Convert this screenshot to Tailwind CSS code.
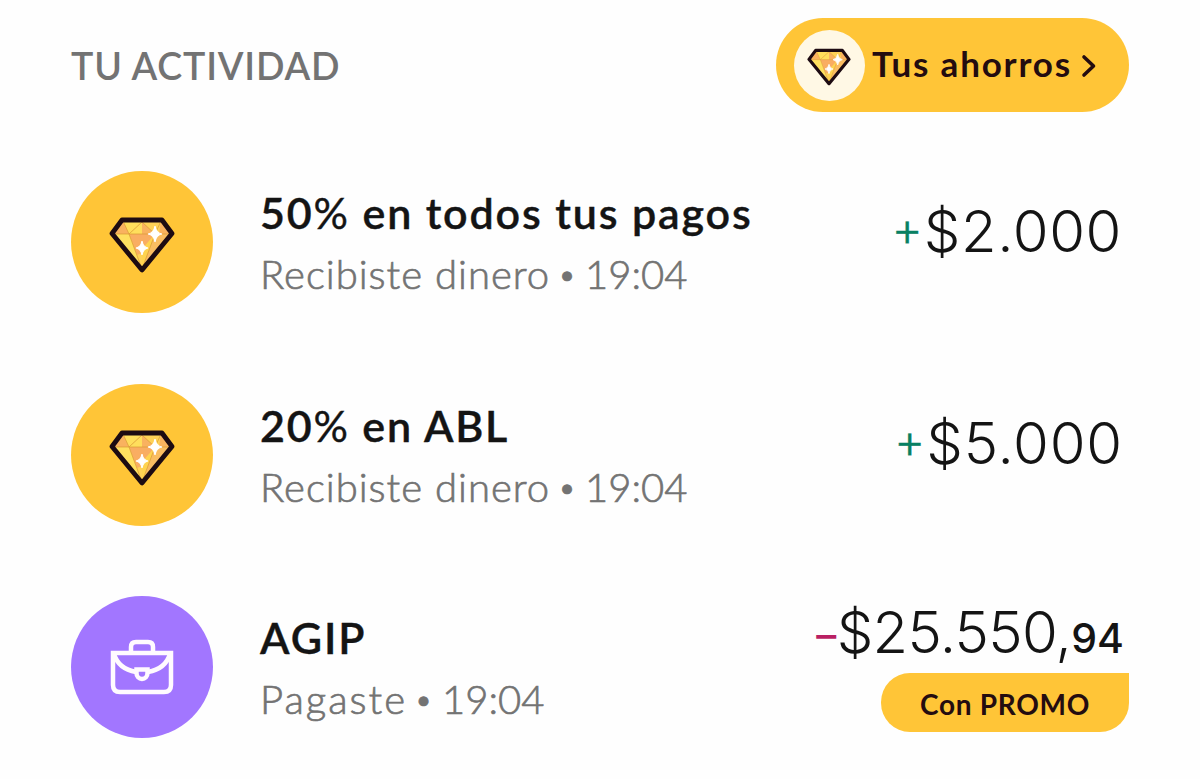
<!DOCTYPE html>
<html lang="es">
<head>
    <meta charset="UTF-8">
    <meta name="viewport" content="width=device-width, initial-scale=1.0">
    <title>Tu actividad</title>
    <script src="https://cdn.jsdelivr.net/npm/@tailwindcss/browser@4"></script>
</head>
<body class="bg-[#fefefe] text-[#141414] font-['Lato',sans-serif] w-[1200px] h-[779px] overflow-hidden whitespace-nowrap">

    <!-- Diamante compartido -->
    <svg class="hidden">
        <symbol id="diamond" viewBox="0 0 66 56">
            <path d="M13 3H53L63 16.5L33 53L3 16.5Z" fill="#ffd257"/>
            <path d="M14 4L20 17H4ZM33 5L46 17H20ZM52 4L62 17H50Z" fill="#f9b25f"/>
            <path d="M33 5L20 17H33ZM14 4H33L20 17Z" fill="#ffde5c"/>
            <path d="M20 17H46L40 33L28 38Z" fill="#f9ad62"/>
            <path d="M46 17H61L33 52Z" fill="#fabd62"/>
            <path d="M46 17L33 32V52Z" fill="#ffd34f"/>
            <path d="M20 17L33 52L4 17Z" fill="#ffe060"/>
            <path d="M4 17H62M14 4L20 17L33 52L46 17L52 4M20 17L33 5L46 17" fill="none" stroke="#d99a35" stroke-width="0.7"/>
            <path d="M46 9Q47 16 53 17Q47 18 46 25Q45 18 39 17Q45 16 46 9ZM33 24Q34 30 39 31Q34 32 33 38Q32 32 27 31Q32 30 33 24Z" fill="#fff" stroke="#fff" stroke-width="1.2"/>
            <path d="M13 3H53L63 16.5L33 53L3 16.5Z" fill="none" stroke="#1d0b12" stroke-width="4.8" stroke-linejoin="round"/>
        </symbol>
    </svg>

    <div class="flex flex-col px-[71px] pt-[18px]">
        <header class="flex items-center justify-between h-[94px]">
            <h1 class="text-[37.5px] font-semibold text-[#737373] leading-none tracking-[0.8px] pt-[2px]">TU ACTIVIDAD</h1>
            <a href="#" class="flex items-center w-[353px] h-[94px] rounded-full bg-[#ffc537] pl-[18px] text-[#240c10]">
                <span class="flex items-center justify-center w-[71px] h-[71px] rounded-full bg-[#fff8e5] pr-[1px]">
                    <svg class="w-[44px] h-[38px] mt-1"><use href="#diamond"/></svg>
                </span>
                <span class="ml-[7px] w-[200px] text-[35px] font-bold leading-none tracking-[1.8px] pb-[4px]">Tus ahorros</span>
                <svg class="ml-[9px] w-[16px] h-[24px] mt-[2px]" viewBox="0 0 16 24" fill="none" stroke="currentColor" stroke-width="3.6" stroke-linecap="round" stroke-linejoin="round"><path d="M3 3L12.500 12L3 21"/></svg>
            </a>
        </header>

        <ul class="flex flex-col gap-[70.5px] pt-[59px]">
            <li class="flex h-[142px]">
                <span class="flex items-center justify-center w-[142px] h-[142px] rounded-full bg-[#ffc537] pt-[6px] pr-[1px]">
                    <svg class="w-[66px] h-[56px]"><use href="#diamond"/></svg>
                </span>
                <div class="ml-[47px] pt-[15px]">
                    <h2 class="text-[43px] font-semibold leading-[54px] tracking-[1.85px] [-webkit-text-stroke:0.4px_#141414]">50<span class="font-normal">%</span> en todos tus pagos</h2>
                    <p class="flex text-[40px] font-light text-[#737373] leading-[52px] mt-[8px] tracking-[1px] [-webkit-text-stroke:0.7px_#737373]"><span>Recibiste dinero</span><span class="w-[35px] text-center text-[32px]">•</span><span class="tracking-[0px]">19:04</span></p>
                </div>
                <p class="flex items-center ml-auto pr-[7px] pt-[23px] h-[96px] text-[58px] font-light leading-[72px] font-['Inter',sans-serif] tracking-[0.6px]"><span class="text-[#088062] text-[48px] font-light mr-[1px] pb-[4px] tracking-[0px] [-webkit-text-stroke:0.3px_#088062]">+</span>$2.000</p>
            </li>
            <li class="flex h-[142px]">
                <span class="flex items-center justify-center w-[142px] h-[142px] rounded-full bg-[#ffc537] pt-[6px] pr-[1px]">
                    <svg class="w-[66px] h-[56px]"><use href="#diamond"/></svg>
                </span>
                <div class="ml-[47px] pt-[15px]">
                    <h2 class="text-[43px] font-semibold leading-[54px] tracking-[1.8px] [-webkit-text-stroke:0.4px_#141414]">20<span class="font-normal">%</span> en ABL</h2>
                    <p class="flex text-[40px] font-light text-[#737373] leading-[52px] mt-[8px] tracking-[1px] [-webkit-text-stroke:0.7px_#737373]"><span>Recibiste dinero</span><span class="w-[35px] text-center text-[32px]">•</span><span class="tracking-[0px]">19:04</span></p>
                </div>
                <p class="flex items-center ml-auto pr-[6px] pt-[23px] h-[96px] text-[58px] font-light leading-[72px] font-['Inter',sans-serif] tracking-[0.8px]"><span class="text-[#088062] text-[48px] font-light mr-[1px] pb-[4px] tracking-[0px] [-webkit-text-stroke:0.3px_#088062]">+</span>$5.000</p>
            </li>
            <li class="flex h-[142px]">
                <span class="flex items-center justify-center w-[142px] h-[142px] rounded-full bg-[#a276ff]">
                    <svg class="w-[64px] h-[58px]" viewBox="0 0 64 58" fill="none" stroke="#fffaff" stroke-width="4.5">
                        <path d="M3 15H61V47Q61 54 54 54H10Q3 54 3 47Z"/>
                        <path d="M21 15V9Q21 4 26 4H38Q43 4 43 9V15"/>
                        <path d="M4 16C7 26 15 32 26 34M60 16C57 26 49 32 38 34"/>
                        <path d="M26.500 31.500H37.500V35A5.500 6 0 0 1 26.500 35Z"/>
                    </svg>
                </span>
                <div class="ml-[47px] pt-[15px]">
                    <h2 class="text-[43px] font-semibold leading-[54px] tracking-[2px] [-webkit-text-stroke:0.4px_#141414]">AGIP</h2>
                    <p class="flex text-[40px] font-light text-[#737373] leading-[52px] mt-[8px] tracking-[2px] [-webkit-text-stroke:0.7px_#737373]"><span>Pagaste</span><span class="w-[35px] text-center text-[32px]">•</span><span class="tracking-[0px]">19:04</span></p>
                </div>
                <div class="flex flex-col items-end ml-auto">
                    <p class="flex items-baseline pr-[5px] h-[76.500px] text-[58px] font-light leading-[72px] font-['Inter',sans-serif] tracking-[-0.7px]"><span class="text-[#b91f63] text-[40px] font-medium mr-[1px] relative -top-[4px]">–</span>$25.550,<span class="text-[41px] font-medium tracking-[0px]">94</span></p>
                    <span class="flex items-center justify-center w-[248px] h-[59px] rounded-[29px] rounded-tr-none bg-[#ffc537] text-[#240c10] text-[28px] font-bold leading-none tracking-[0.7px] pt-[3px]">Con PROMO</span>
                </div>
            </li>
        </ul>
    </div>
</body>
</html>
